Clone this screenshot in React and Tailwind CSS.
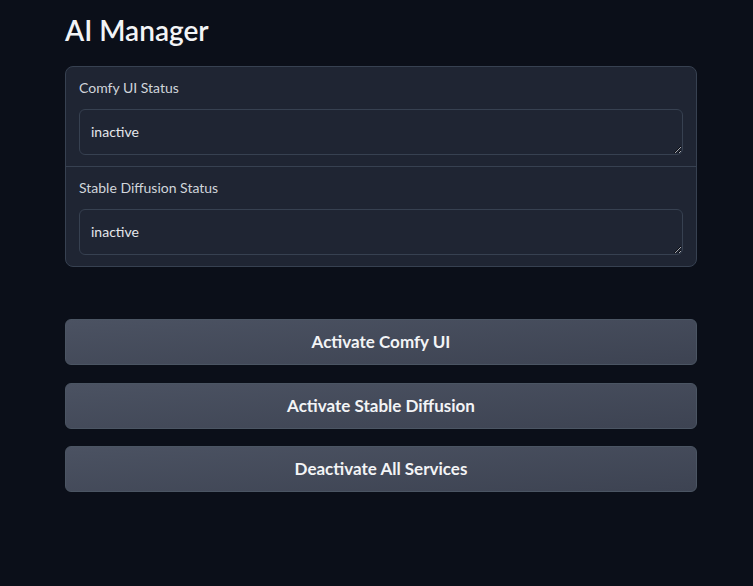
export default function App() {
  const statuses = [
    { label: "Comfy UI Status", value: "inactive" },
    { label: "Stable Diffusion Status", value: "inactive" },
  ];
  const buttons = ["Activate Comfy UI", "Activate Stable Diffusion", "Deactivate All Services"];

  return (
    <div className="min-h-[586px] bg-[#0b0f19] pl-[65px] pr-[56px] pt-[12px] text-[#e5e7eb]" style={{ fontFamily: "Lato, 'Noto Sans', sans-serif" }}>
      <h1 className="text-[28px] font-semibold leading-[36px] text-[#f3f4f6]">AI Manager</h1>
      <div className="mt-[18px] overflow-hidden rounded-lg border border-[#374151] bg-[#1f2533]">
        {statuses.map((s, i) => (
          <div key={s.label} className={"px-[13px] pt-[12px] pb-[11px] " + (i > 0 ? "border-t border-[#374151]" : "")}>
            <div className="text-[14px] leading-[18px] text-[#d1d5db]">{s.label}</div>
            <textarea
              readOnly
              rows={1}
              value={s.value}
              className="mt-[12px] block h-[46px] w-full resize-y rounded-md border border-[#374151] bg-[#1f2533] px-[11px] py-[12px] text-[14px] leading-[20px] text-[#e5e7eb] outline-none"
              style={{ fontFamily: "Lato, 'Noto Sans', sans-serif" }}
            />
          </div>
        ))}
      </div>
      <div className="mt-[52px] flex flex-col gap-[17.5px]">
        {buttons.map((b) => (
          <button
            key={b}
            className="h-[46px] w-full rounded-md border border-[#4b5563] bg-gradient-to-br from-[#4b5262] to-[#3d4352] text-[17px] font-bold text-[#f3f4f6]"
          >
            {b}
          </button>
        ))}
      </div>
    </div>
  );
}
